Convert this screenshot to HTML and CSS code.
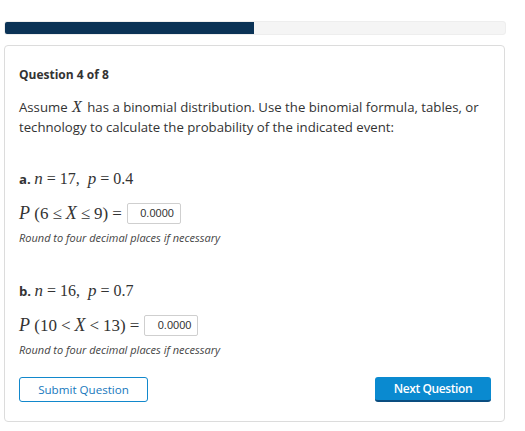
FILE: index.html
```html
<!DOCTYPE html>
<html>
<head>
<meta charset="utf-8">
<link rel="stylesheet" href="styles.css">
</head>
<body>
<div class="page">
  <div class="progress"><div class="progress-fill"></div></div>
  <div class="card">
    <div class="qnum">Question 4 of 8</div>
    <p class="prompt"><span>Assume <span class="mi mx">X</span> has a binomial distribution. Use the binomial formula, tables, or</span> <span>technology to calculate the probability of the indicated event:</span></p>

    <div class="part">
      <div class="part-head"><b>a.</b> <span class="math"><span class="mi">n</span><span class="mo">=</span>17, &nbsp;<span class="mi">p</span><span class="mo">=</span>0.4</span></div>
      <div class="eq"><span class="math big"><span class="mi">P</span> (6<span class="mo">≤</span><span class="mi">X</span><span class="mo">≤</span>9)<span class="mo">=</span></span><span class="box">0.0000</span></div>
      <div class="hint">Round to four decimal places if necessary</div>
    </div>

    <div class="part">
      <div class="part-head"><b>b.</b> <span class="math"><span class="mi">n</span><span class="mo">=</span>16, &nbsp;<span class="mi">p</span><span class="mo">=</span>0.7</span></div>
      <div class="eq"><span class="math big"><span class="mi">P</span> (10<span class="mo">&lt;</span><span class="mi">X</span><span class="mo">&lt;</span>13)<span class="mo">=</span></span><span class="box">0.0000</span></div>
      <div class="hint">Round to four decimal places if necessary</div>
    </div>

    <div class="actions">
      <button class="btn btn-outline">Submit Question</button>
      <button class="btn btn-primary">Next Question</button>
    </div>
  </div>
</div>
</body>
</html>
```
FILE: styles.css
```css
html, body { margin: 0; padding: 0; background: #fff; }
body { font-family: "Open Sans", "Liberation Sans", sans-serif; color: #333; }
.page { padding: 21px 0 0 4px; width: 502px; }
.progress { height: 14px; background: #f5f5f5; border: 1px solid #eee; border-radius: 3px; box-sizing: border-box; overflow: hidden; }
.progress-fill { width: 250px; height: 100%; background: #0b3356; margin: -1px 0 0 -1px; padding-bottom: 2px; }
.card { margin-top: 10px; width: 501px; box-sizing: border-box; height: 377px; border: 1px solid #dcdcdc; border-radius: 4px; padding: 21px 13px 0 14px; }
.qnum { font-weight: 700; font-size: 12px; line-height: 16px; color: #333; }
.prompt { margin: 14px 0 0 0; font-size: 13.2px; line-height: 20px; }
.mi { font-family: "Liberation Serif", "DejaVu Serif", serif; font-style: italic; font-size: 17px; }
.mx { display: inline-block; line-height: 16px; font-size: 16px; margin: 0 2px 0 1px; }
.mo { margin: 0 4px; }
.math { font-family: "Liberation Serif", "DejaVu Serif", serif; font-size: 16px; }
.math.big { font-size: 17px; }
.math.big .mi { font-size: 18px; }
.part { margin-top: 32px; }
.part + .part { margin-top: 36px; }
.part-head { font-size: 13.2px; line-height: 20px; }
.part-head b { font-weight: 700; }
.eq { margin-top: 14px; display: flex; align-items: center; gap: 1px; height: 21px; }
.box { display: inline-block; height: 19px; border: 1px solid #cfcfcf; border-radius: 2px; font-family: "Liberation Sans", Arial, sans-serif; font-size: 11px; line-height: 19px; text-align: right; padding-right: 6px; width: 46px; color: #333; }
.hint { margin-top: 7px; font-style: italic; font-size: 11px; line-height: 14px; color: #444; }
.actions { margin-top: 20px; display: flex; justify-content: space-between; }
.btn { height: 25px; font-size: 12px; border-radius: 3px; font-family: "Open Sans", "Liberation Sans", sans-serif; padding: 0; cursor: pointer; }
.btn-outline { width: 129px; background: #fff; border: 1.5px solid #1288cc; color: #1878bd; font-size: 11.6px; }
.btn-primary { width: 116px; background: #0a8ad0; border: none; border-bottom: 2px solid #0a4d80; color: #fff; font-weight: 600; letter-spacing: -0.4px; }
```
